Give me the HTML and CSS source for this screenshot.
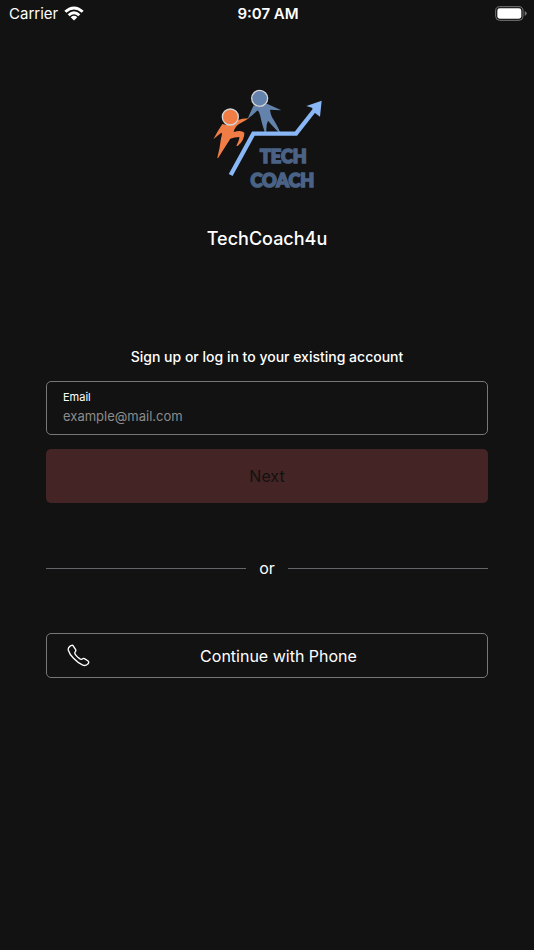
FILE: index.html
```html
<!DOCTYPE html>
<html lang="en">
<head>
  <meta charset="UTF-8" />
  <meta name="viewport" content="width=device-width, initial-scale=1.0" />
  <title>TechCoach4u</title>
  <link rel="stylesheet" href="styles.css">
</head>
<body>

<header class="status-bar">
  <div class="carrier">
    <span>Carrier</span>
    <svg class="wifi" viewBox="0 0 60 44" aria-hidden="true">
      <path d="M1 14 Q30 -12 59 14 L53 20 Q30 0 7 20 Z" />
      <path d="M11 24 Q30 7 49 24 L43 30 Q30 18 17 30 Z" />
      <path d="M20 33 Q30 25 40 33 L30 43 Z" />
    </svg>
  </div>
  <span class="time">9:07 AM</span>
  <div class="power">
    <svg class="battery" viewBox="0 0 96 45" aria-hidden="true">
      <rect class="battery-shell" x="2" y="2" width="82" height="41" rx="12" />
      <rect class="battery-level" x="7" y="7" width="72" height="31" rx="7" />
      <path class="battery-tip" d="M89 15 Q95 18 95 22 Q95 27 89 30 Z" />
    </svg>
  </div>
</header>

<main class="container">
  <svg class="logo" viewBox="0 0 405 360" role="img" aria-label="Tech Coach">
    <!-- blue figure -->
    <path class="blue" d="M161 76 Q179 86 201 71 Q221 80 244 91 Q226 90 210 89 Q212 103 216 112 Q227 128 240 155 L236 157 Q215 135 204 122 Q198 135 199 156 L194 156 Q185 130 180 105 Q175 88 171 92 Q160 105 143 116 Q153 93 161 76 Z" />
    <circle class="head blue" cx="179" cy="55" r="24" />
    <!-- orange figure -->
    <path class="orange" d="M67 132 Q90 139 111 121 Q126 115 147 115 Q133 124 117 132 Q103 143 101 156 Q124 149 133 158 Q134 180 113 198 L109 197 Q119 178 118 171 Q103 171 91 176 Q73 204 54 235 L52 233 Q60 203 63 175 Q68 159 64 158 Q52 167 40 178 Q54 151 67 132 Z" />
    <circle class="head orange" cx="91" cy="111" r="24" />
    <!-- growth arrow -->
    <path class="arrow-line" d="M92 285 L160 161 H288 L346 87" />
    <path class="arrow-head" d="M365 62 L360 110 L344 98 L336 83 L319 78 Z" />
    <text class="logo-text" x="250" y="250">TECH</text>
    <text class="logo-text" x="247" y="322">COACH</text>
  </svg>
  <h1>TechCoach4u</h1>

  <form class="login">
    <h2>Sign up or log in to your existing account</h2>
    <div class="field">
      <label for="email">Email</label>
      <input type="email" id="email" placeholder="example@mail.com" />
    </div>
    <button type="submit" class="next-btn" disabled>Next</button>
  </form>

  <div class="divider"><span>or</span></div>

  <button type="button" class="phone-btn">
    <svg class="phone-icon" viewBox="0 0 24 24" aria-hidden="true">
      <path d="M3.2 2.2 C4.5 1.2 5.8 1 6.5 2 L9 5.9 C9.5 6.8 9.2 7.4 8.5 8.2 C7.6 9.2 7.8 9.7 9 11.3 C10.2 12.9 11.6 14.2 13.1 15.3 C14.5 16.3 15 16.4 15.9 15.6 C16.7 14.9 17.3 14.7 18.2 15.2 L22 17.7 C23 18.5 22.8 19.7 21.8 20.8 C20.2 22.8 18.7 23 16 21.8 C12.7 20.3 9.6 17.8 6.8 14.9 C4 12 2.1 9 1.4 6.5 C.9 4.5 1.6 3.3 3.2 2.2 Z" />
    </svg>
    <span>Continue with Phone</span>
  </button>
</main>

</body>
</html>
```
FILE: styles.css
```css
* {
  box-sizing: border-box;
}
body {
  margin: 0;
  min-height: 100vh;
  font-family: Inter, Roboto, sans-serif;
  font-size: 16px;
  background-color: #121212;
  color: #ffffff;
}
.status-bar {
  display: grid;
  grid-template-columns: 1fr auto 1fr;
  align-items: center;
  height: 26px;
  padding: 0 7px 0 9px;
  font-size: 15px;
}
.carrier {
  display: flex;
  align-items: center;
  gap: 6px;
}
.wifi {
  width: 20px;
  height: 15px;
  fill: #ffffff;
}
.time {
  font-weight: 600;
}
.power {
  display: flex;
  justify-content: flex-end;
}
.battery {
  width: 32px;
  height: 15px;
}
.battery-shell {
  fill: none;
  stroke: #77777a;
  stroke-width: 3;
}
.battery-level {
  fill: #ffffff;
}
.battery-tip {
  fill: #77777a;
}
.container {
  display: flex;
  flex-direction: column;
  padding: 54px 46px;
}
.logo {
  align-self: center;
  width: 135px;
  height: 120px;
}
.blue {
  fill: #6483ac;
}
.orange {
  fill: #f07d46;
}
.head {
  stroke: #d5d5d8;
  stroke-width: 4;
}
.arrow-line {
  fill: none;
  stroke: #8ab7f5;
  stroke-width: 13;
}
.arrow-head {
  fill: #8ab7f5;
}
.logo-text {
  font-family: Lato, sans-serif;
  font-size: 54px;
  font-weight: 900;
  text-anchor: middle;
  fill: #4a6285;
  stroke: #4a6285;
  stroke-width: 5;
}
h1 {
  margin: 27px 0 0;
  font-size: 18px;
  font-weight: 500;
  line-height: 24px;
  text-align: center;
}
.login {
  display: flex;
  flex-direction: column;
  margin-top: 96px;
}
h2 {
  margin: 0 0 14px;
  font-size: 14px;
  font-weight: 500;
  line-height: 20px;
  text-align: center;
}
.field {
  display: flex;
  flex-direction: column;
  height: 54px;
  padding: 7px 16px;
  border: 1px solid #77777a;
  border-radius: 5px;
}
.field label {
  font-size: 11px;
  line-height: 16px;
}
.field input {
  width: 100%;
  height: 26px;
  padding: 0;
  border: none;
  outline: none;
  background: none;
  color: #ffffff;
  font-family: inherit;
  font-size: 13px;
}
.field input::placeholder {
  color: #8c8c8c;
  opacity: 1;
}
.next-btn {
  height: 54px;
  margin-top: 14px;
  border: none;
  border-radius: 5px;
  background-color: #442424;
  color: #121212;
  font-family: inherit;
  font-size: 16px;
}
.divider {
  display: flex;
  align-items: center;
  gap: 13px;
  margin-top: 52px;
  line-height: 26px;
}
.divider::before,
.divider::after {
  content: "";
  flex: 1;
  height: 1px;
  background-color: #66666a;
}
.phone-btn {
  display: flex;
  align-items: center;
  height: 45px;
  margin-top: 52px;
  padding: 0 20px;
  border: 1px solid #77777a;
  border-radius: 5px;
  background: none;
  color: #ffffff;
  font-family: inherit;
  font-size: 16px;
  cursor: pointer;
}
.phone-btn span {
  flex: 1;
  text-align: center;
}
.phone-icon {
  width: 23px;
  height: 23px;
  fill: none;
  stroke: #ffffff;
  stroke-width: 1.4;
}
```
